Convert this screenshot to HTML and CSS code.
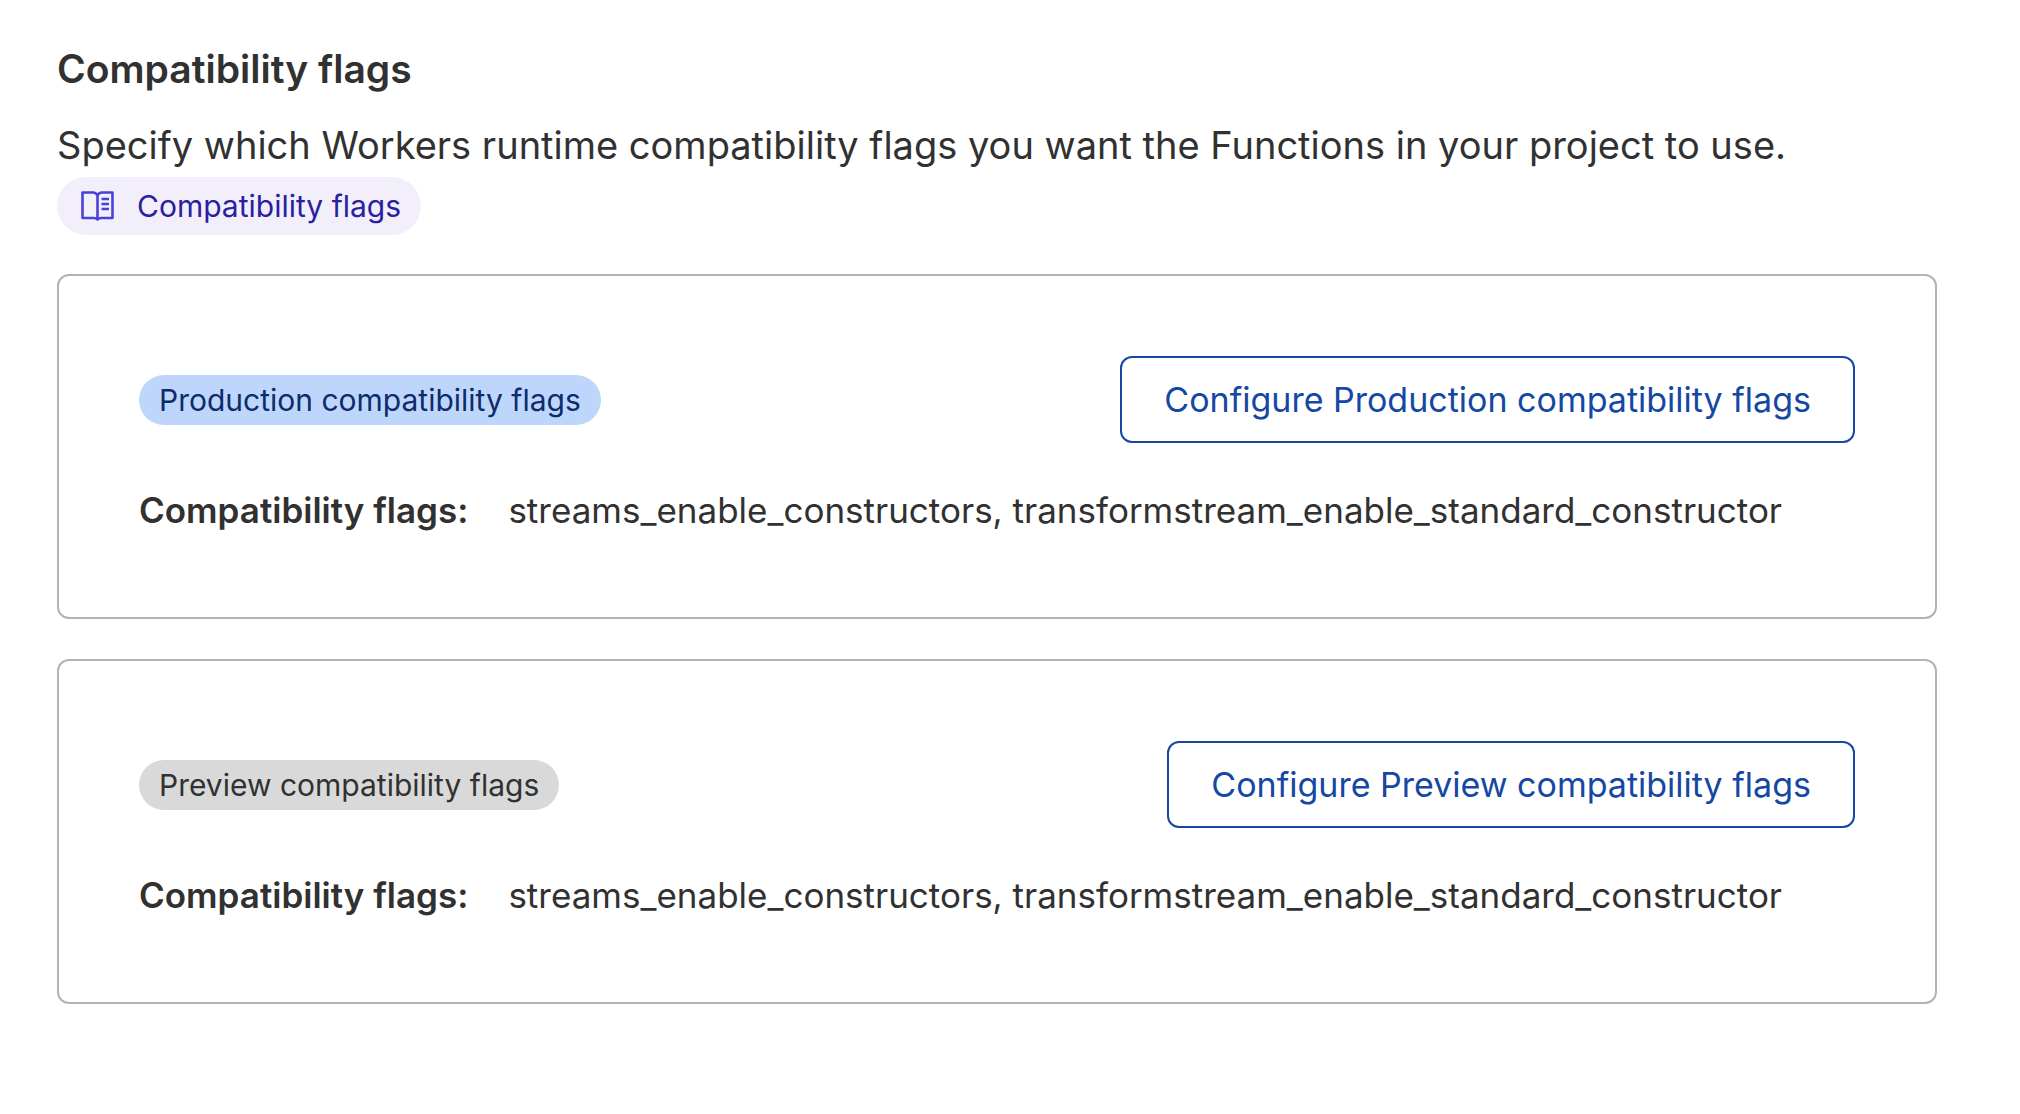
FILE: index.html
```html
<!DOCTYPE html>
<html lang="en">
<head>
<meta charset="utf-8">
<title>Compatibility flags</title>
<link rel="stylesheet" href="styles.css">
</head>
<body>
<main class="page">
  <h1 class="title">Compatibility flags</h1>
  <p class="intro">Specify which Workers runtime compatibility flags you want the Functions in your project to use.</p>
  <a class="doc-link" href="#docs">
    <svg class="doc-icon" viewBox="0 0 33 30" fill="none" stroke="currentColor" stroke-width="2.6" stroke-linejoin="round" aria-hidden="true">
      <path d="M16.5 4.5V28.5M16.500 4.500C15.500 2.500 14 1.500 12 1.500H1.500V27H13C14.500 27 15.500 27.700 16.500 28.500C17.500 27.700 18.500 27 20 27H31.500V1.500H21C19 1.500 17.500 2.500 16.500 4.500M20.500 8H28M20.500 13H28M20.500 18H28"/>
    </svg>
    Compatibility flags
  </a>
  <section class="card">
    <div class="card-head">
      <span class="badge badge-production">Production compatibility flags</span>
      <button class="configure" type="button">Configure Production compatibility flags</button>
    </div>
    <dl class="flags">
      <dt>Compatibility flags:</dt>
      <dd>streams_enable_constructors, transformstream_enable_standard_constructor</dd>
    </dl>
  </section>
  <section class="card">
    <div class="card-head">
      <span class="badge badge-preview">Preview compatibility flags</span>
      <button class="configure" type="button">Configure Preview compatibility flags</button>
    </div>
    <dl class="flags">
      <dt>Compatibility flags:</dt>
      <dd>streams_enable_constructors, transformstream_enable_standard_constructor</dd>
    </dl>
  </section>
</main>
</body>
</html>
```
FILE: styles.css
```css
* { box-sizing: border-box; }
body {
  margin: 0;
  background: #fff;
  color: #313131;
  font-family: Inter, "Liberation Sans", sans-serif;
}
.page { padding: 39px 83px 40px 57px; }
.title { margin: 0; font-size: 39px; line-height: 60px; font-weight: 600; }
.intro { margin: 16px 0 2px; font-size: 38px; line-height: 60px; }
.doc-link {
  display: flex;
  align-items: center;
  gap: 23px;
  width: fit-content;
  padding: 0 20px 0 24px;
  border-radius: 29px;
  background: #f2effb;
  color: #2a20a2;
  font-size: 30px;
  line-height: 58px;
  text-decoration: none;
}
.doc-icon { width: 33px; height: 30px; color: #4a42d8; }
.card {
  margin-top: 40px;
  padding: 80px;
  border: 2px solid #b3b3b3;
  border-radius: 12px;
}
.doc-link + .card { margin-top: 39px; }
.card-head { display: flex; align-items: center; justify-content: space-between; }
.badge { padding: 0 20px; border-radius: 25px; font-size: 30px; line-height: 50px; }
.badge-production { background: #bed6fb; color: #0c2c6b; }
.badge-preview { background: #d9d9d9; color: #313131; }
.configure {
  height: 87px;
  padding: 0 42px;
  border: 2px solid #1448a3;
  border-radius: 12px;
  background: #fff;
  color: #1448a3;
  font: inherit;
  font-size: 34px;
}
.flags { display: flex; gap: 40px; margin: 40px 0 0; font-size: 35px; line-height: 54px; }
.flags dt { font-weight: 600; }
.flags dd { margin: 0; }
```
